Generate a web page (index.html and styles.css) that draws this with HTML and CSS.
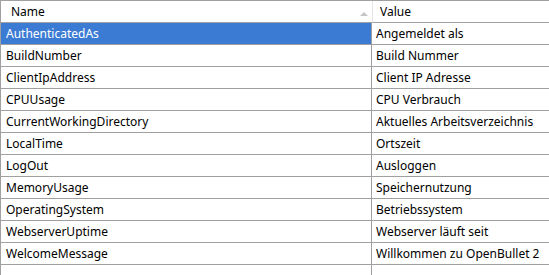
FILE: index.html
```html
<!DOCTYPE html>
<html>
<head>
<meta charset="utf-8">
<link rel="stylesheet" href="styles.css">
</head>
<body>
<div class="grid">
  <div class="head name-col"><span class="head-text">Name</span><span class="sort"></span></div>
  <div class="head value-col"><span class="head-text">Value</span></div>

  <div class="cell name-col selected">AuthenticatedAs</div><div class="cell value-col">Angemeldet als</div>
  <div class="cell name-col">BuildNumber</div><div class="cell value-col">Build Nummer</div>
  <div class="cell name-col">ClientIpAddress</div><div class="cell value-col">Client IP Adresse</div>
  <div class="cell name-col">CPUUsage</div><div class="cell value-col">CPU Verbrauch</div>
  <div class="cell name-col">CurrentWorkingDirectory</div><div class="cell value-col">Aktuelles Arbeitsverzeichnis</div>
  <div class="cell name-col">LocalTime</div><div class="cell value-col">Ortszeit</div>
  <div class="cell name-col">LogOut</div><div class="cell value-col">Ausloggen</div>
  <div class="cell name-col">MemoryUsage</div><div class="cell value-col">Speichernutzung</div>
  <div class="cell name-col">OperatingSystem</div><div class="cell value-col">Betriebssystem</div>
  <div class="cell name-col">WebserverUptime</div><div class="cell value-col">Webserver läuft seit</div>
  <div class="cell name-col">WelcomeMessage</div><div class="cell value-col">Willkommen zu OpenBullet 2</div>

  <div class="filler name-col"></div><div class="filler value-col"></div>
</div>
</body>
</html>
```
FILE: styles.css
```css
html, body {
  margin: 0;
  padding: 0;
  background: #ffffff;
  height: 100%;
}
body {
  font-family: "Noto Sans", "Open Sans", sans-serif;
  font-size: 12px;
  color: #000000;
  overflow: hidden;
}
.grid {
  display: grid;
  grid-template-columns: 372px 1fr;
  grid-template-rows: 22px repeat(11, 22px) 1fr;
  height: 275px;
  border-top: 1px solid #a0a0a0;
  box-sizing: border-box;
}
.head {
  display: flex;
  align-items: center;
  height: 21px;
  border-bottom: 1px solid #a0a0a0;
  position: relative;
}
.head.name-col {
  border-left: 1px solid #a0a0a0;
  padding-left: 10px;
}
.head.value-col {
  border-left: 1px solid #e5e5e5;
  padding-left: 7px;
}
.sort {
  position: absolute;
  right: 4px;
  top: 11px;
  width: 0;
  height: 0;
  border-left: 4px solid transparent;
  border-right: 4px solid transparent;
  border-bottom: 4px solid #c6c6c6;
}
.cell {
  display: flex;
  align-items: center;
  height: 21px;
  border-bottom: 1px solid #a0a0a0;
  white-space: nowrap;
  overflow: hidden;
}
.cell.name-col {
  border-left: 1px solid #a0a0a0;
  border-right: 1px solid #a0a0a0;
  padding-left: 5px;
}
.cell.value-col {
  padding-left: 4px;
}
.cell.selected {
  background: #3c7bd4;
  color: #ffffff;
  border-right-color: #a0a0a0;
}
.filler.name-col {
  border-left: 1px solid #a0a0a0;
  border-right: 1px solid #a0a0a0;
}
```
